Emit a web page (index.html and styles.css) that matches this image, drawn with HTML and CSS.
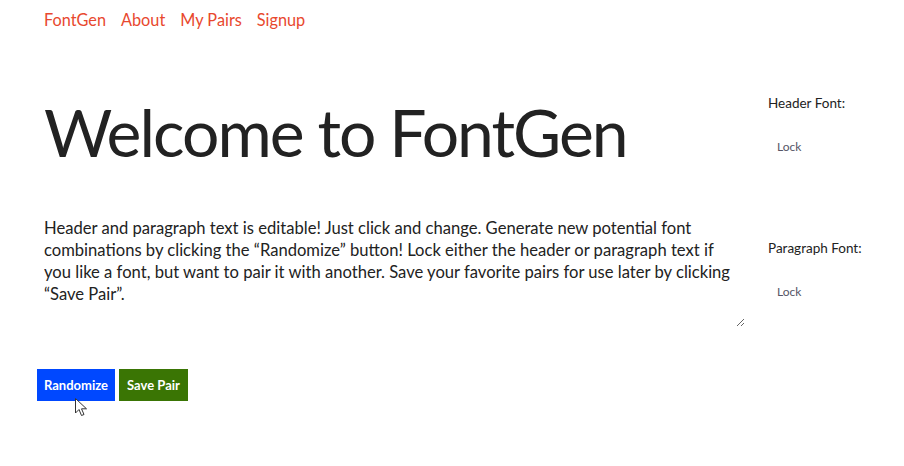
FILE: index.html
```html
<!DOCTYPE html>
<html>
<head>
<meta charset="utf-8">
<link rel="stylesheet" href="styles.css">
</head>
<body>
<nav class="nav">
  <a href="#">FontGen</a>
  <a href="#">About</a>
  <a href="#">My Pairs</a>
  <a href="#">Signup</a>
</nav>
<div class="page">
  <main class="main">
    <h1 class="title">Welcome to FontGen</h1>
    <textarea class="para">Header and paragraph text is editable! Just click and change. Generate new potential font combinations by clicking the “Randomize” button! Lock either the header or paragraph text if you like a font, but want to pair it with another. Save your favorite pairs for use later by clicking “Save Pair”.</textarea>
  </main>
  <aside class="side">
    <div class="group">
      <div class="label">Header Font:</div>
      <div class="lock">Lock</div>
    </div>
    <div class="group second">
      <div class="label">Paragraph Font:</div>
      <div class="lock">Lock</div>
    </div>
  </aside>
</div>
<div class="actions">
  <button class="btn blue">Randomize</button>
  <button class="btn green">Save Pair</button>
  <div class="pointer"><svg width="16" height="22" viewBox="0 0 16 22"><path d="M1.5 1.5 L1.5 16 L5 12.5 L7.5 18.5 L10 17.5 L7.5 11.8 L12.5 11.8 Z" fill="#ffffff" stroke="#333333" stroke-width="1"/></svg></div>
</div>
</body>
</html>
```
FILE: styles.css
```css
body {
  margin: 0;
  font-family: "Lato", "Noto Sans", sans-serif;
  color: #222;
  background: #fff;
}
.nav {
  display: flex;
  gap: 15px;
  padding: 10px 0 0 44px;
  height: 24px;
}
.nav a {
  color: #e8482e;
  text-decoration: none;
  font-size: 16.3px;
}
.page {
  display: flex;
  align-items: flex-start;
  padding-left: 44px;
}
.main {
  width: 701px;
  display: flex;
  flex-direction: column;
}
.title {
  font-size: 66px;
  letter-spacing: -2px;
  font-weight: 400;
  margin: 58px 0 0 0;
  line-height: 80px;
  color: #222;
}
.para {
  display: block;
  box-sizing: border-box;
  margin-top: 45px;
  width: 701px;
  height: 110px;
  border: none;
  outline: none;
  padding: 0 5px 0 0;
  font-family: inherit;
  font-size: 16.6px;
  line-height: 22px;
  color: #222;
  resize: both;
  overflow: hidden;
}
.side {
  margin-left: 23px;
  padding-top: 61px;
}
.label {
  font-size: 13.5px;
  color: #222;
}
.lock {
  font-size: 12px;
  color: #556;
  margin: 28px 0 0 9px;
}
.second {
  margin-top: 86px;
}
.actions {
  position: relative;
  display: flex;
  gap: 4px;
  padding: 42px 0 0 37px;
  height: 100px;
}
.btn {
  border: none;
  color: #fff;
  font-family: inherit;
  font-weight: 700;
  font-size: 13px;
  height: 32px;
  padding: 0 7px;
}
.blue { background: #0048ff; width: 78px; }
.green { background: #3a7504; width: 69px; }
.pointer {
  position: absolute;
  left: 74px;
  top: 70px;
  width: 16px;
  height: 22px;
  z-index: 2;
}
.pointer svg {
  display: block;
}
```
